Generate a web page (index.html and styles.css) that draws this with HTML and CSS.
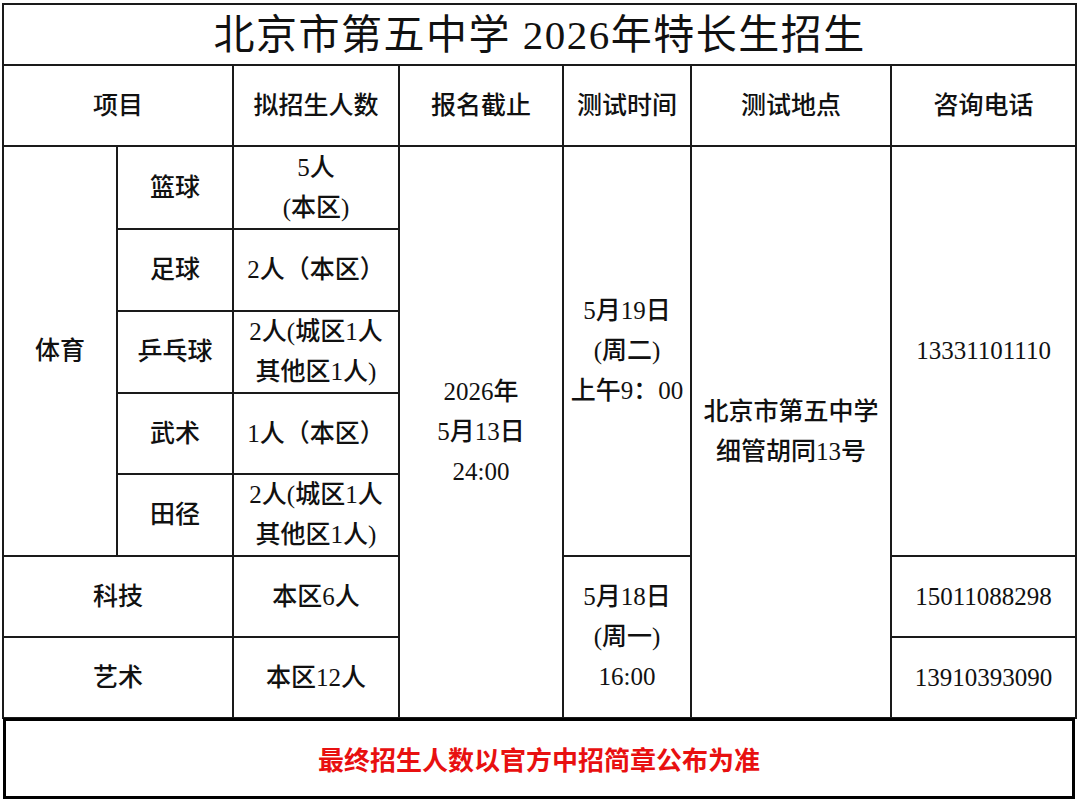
FILE: index.html
```html
<!DOCTYPE html>
<html lang="zh-CN">
<head>
<meta charset="utf-8">
<title>北京市第五中学 2026年特长生招生</title>
<link rel="stylesheet" href="styles.css">
</head>
<body>
<div class="sheet">
  <table class="grid">
    <colgroup>
      <col class="c1"><col class="c2"><col class="c3"><col class="c4"><col class="c5"><col class="c6"><col class="c7">
    </colgroup>
    <tr class="r-title"><td colspan="7" class="title">北京市第五中学 2026年特长生招生</td></tr>
    <tr class="r-head">
      <td colspan="2">项目</td><td>拟招生人数</td><td>报名截止</td><td>测试时间</td><td>测试地点</td><td>咨询电话</td>
    </tr>
    <tr class="r1">
      <td rowspan="5">体育</td><td>篮球</td><td>5人<br>(本区)</td>
      <td rowspan="7">2026年<br>5月13日<br>24:00</td>
      <td rowspan="5">5月19日<br>(周二)<br>上午9：00</td>
      <td rowspan="7">北京市第五中学<br>细管胡同13号</td>
      <td rowspan="5">13331101110</td>
    </tr>
    <tr class="r2"><td>足球</td><td>2人（本区）</td></tr>
    <tr class="r3"><td>乒乓球</td><td>2人(城区1人<br>其他区1人)</td></tr>
    <tr class="r4"><td>武术</td><td>1人（本区）</td></tr>
    <tr class="r5"><td>田径</td><td>2人(城区1人<br>其他区1人)</td></tr>
    <tr class="r6">
      <td colspan="2">科技</td><td>本区6人</td>
      <td rowspan="2">5月18日<br>(周一)<br>16:00</td>
      <td>15011088298</td>
    </tr>
    <tr class="r7"><td colspan="2">艺术</td><td>本区12人</td><td>13910393090</td></tr>
  </table>
  <div class="note">最终招生人数以官方中招简章公布为准</div>
</div>
</body>
</html>
```
FILE: styles.css
```css
html, body {
  margin: 0;
  padding: 0;
  background: #fff;
}
body {
  font-family: "Liberation Serif", "Noto Sans CJK SC", serif;
  color: #111;
}
.sheet {
  padding: 3px 0 0 2px;
  width: 1073px;
}
.grid {
  border-collapse: collapse;
  table-layout: fixed;
  width: 1073px;
}
.c1 { width: 114px; }
.c2 { width: 116px; }
.c3 { width: 166px; }
.c4 { width: 164px; }
.c5 { width: 128px; }
.c6 { width: 200px; }
.c7 { width: 185px; }
.grid td {
  border: 2px solid #1a1a1a;
  text-align: center;
  vertical-align: middle;
  padding: 0;
  font-size: 25px;
  line-height: 40px;
  font-weight: 500;
  white-space: nowrap;
}
.r-title { height: 61px; }
.r-head { height: 81px; }
.r1 { height: 83px; }
.r2 { height: 82px; }
.r3 { height: 82px; }
.r4 { height: 81px; }
.r5 { height: 82px; }
.r6 { height: 81px; }
.r7 { height: 81px; }
.grid td.title {
  font-size: 41px;
  font-weight: 400;
  line-height: 50px;
  letter-spacing: 1.5px;
}
.note {
  box-sizing: border-box;
  height: 81px;
  width: 1072px;
  margin-top: -1px;
  margin-left: 1px;
  border: 3px solid #000;
  color: #e81010;
  font-size: 26px;
  font-weight: 700;
  display: flex;
  align-items: center;
  justify-content: center;
}
```
